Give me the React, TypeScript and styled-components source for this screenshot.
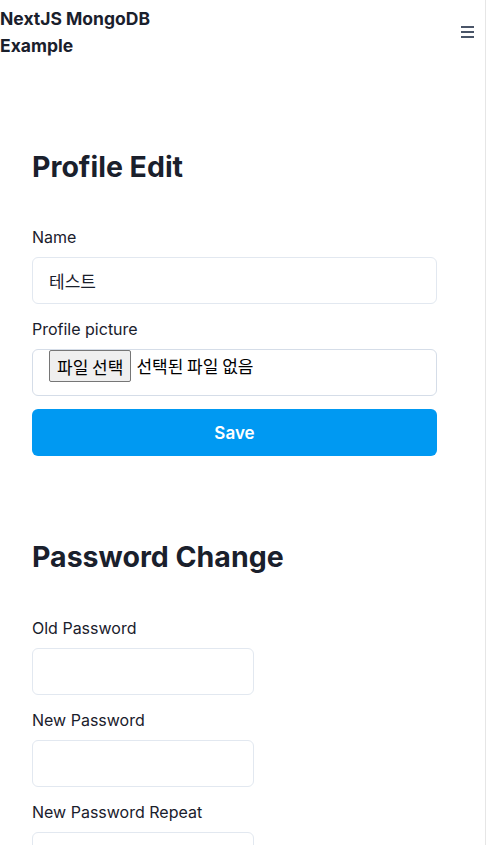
import styled, { createGlobalStyle } from "styled-components";

const GlobalStyle = createGlobalStyle`
  html, body {
    margin: 0;
    padding: 0;
    background: #ffffff;
  }
  body {
    font-family: Inter, "Noto Sans", "Noto Sans CJK KR", sans-serif;
    color: #1a202c;
  }
  * {
    box-sizing: border-box;
  }
`;

const Page = styled.div`
  min-height: 900px;
  border-right: 1px solid #e6e6e6;
  width: 486px;
`;

const Header = styled.header`
  display: flex;
  flex-direction: row;
  align-items: center;
  justify-content: space-between;
  padding: 5px 11px 4px 0;
`;

const Brand = styled.div`
  width: 170px;
  font-size: 17.5px;
  font-weight: 700;
  line-height: 27px;
  color: #1a202c;
`;

const MenuButton = styled.button`
  display: flex;
  flex-direction: column;
  gap: 3px;
  padding: 0;
  border: none;
  background: none;
  cursor: pointer;
  span {
    display: block;
    width: 13px;
    height: 2px;
    background: #4a5568;
  }
`;

const Main = styled.main`
  width: 405px;
  margin-left: 32px;
  padding-top: 87px;
`;

const Section = styled.section<{ $gap?: number }>`
  display: flex;
  flex-direction: column;
  margin-bottom: ${(p) => p.$gap ?? 0}px;
`;

const Title = styled.h1<{ $below: number }>`
  margin: 0 0 ${(p) => p.$below}px;
  font-size: 28.5px;
  font-weight: 700;
  line-height: 34px;
  color: #1a202c;
`;

const Label = styled.label`
  display: block;
  font-size: 16px;
  line-height: 24px;
  margin-bottom: 8px;
  color: #1a202c;
`;

const Field = styled.div`
  margin-bottom: 13px;
`;

const TextInput = styled.input<{ $narrow?: boolean }>`
  display: block;
  width: ${(p) => (p.$narrow ? "222px" : "100%")};
  height: 47px;
  padding: 0 16px;
  border: 1px solid #e2e8f0;
  border-radius: 6px;
  font-family: "Noto Sans CJK KR", Inter, sans-serif;
  font-size: 17px;
  color: #1a202c;
  background: #ffffff;
  outline: none;
`;

const FileBox = styled.div`
  display: flex;
  flex-direction: row;
  align-items: flex-start;
  height: 47px;
  padding: 0 16px;
  border: 1px solid #d5dde8;
  border-radius: 6px;
  font-family: "Noto Sans CJK KR", sans-serif;
  font-size: 17px;
`;

const FilePick = styled.span`
  display: flex;
  align-items: center;
  height: 32px;
  padding: 0 7px;
  margin-right: 5px;
  background: #efefef;
  border: 1px solid #767676;
  border-radius: 2px;
  color: #000000;
`;

const FileName = styled.span`
  line-height: 32px;
  color: #000000;
`;

const SaveButton = styled.button`
  width: 100%;
  height: 47px;
  border: none;
  border-radius: 6px;
  background: #0099f2;
  color: #ffffff;
  font-family: Inter, sans-serif;
  font-size: 17px;
  font-weight: 600;
  cursor: pointer;
`;

export default function App() {
  return (
    <Page>
      <GlobalStyle />
      <Header>
        <Brand>NextJS MongoDB Example</Brand>
        <MenuButton aria-label="menu">
          <span />
          <span />
          <span />
        </MenuButton>
      </Header>
      <Main>
        <Section $gap={84}>
          <Title $below={41}>Profile Edit</Title>
          <Field>
            <Label>Name</Label>
            <TextInput defaultValue="테스트" />
          </Field>
          <Field>
            <Label>Profile picture</Label>
            <FileBox>
              <FilePick>파일 선택</FilePick>
              <FileName>선택된 파일 없음</FileName>
            </FileBox>
          </Field>
          <SaveButton>Save</SaveButton>
        </Section>
        <Section>
          <Title $below={42}>Password Change</Title>
          <Field>
            <Label>Old Password</Label>
            <TextInput type="password" $narrow />
          </Field>
          <Field>
            <Label>New Password</Label>
            <TextInput type="password" $narrow />
          </Field>
          <Field>
            <Label>New Password Repeat</Label>
            <TextInput type="password" $narrow />
          </Field>
        </Section>
      </Main>
    </Page>
  );
}
